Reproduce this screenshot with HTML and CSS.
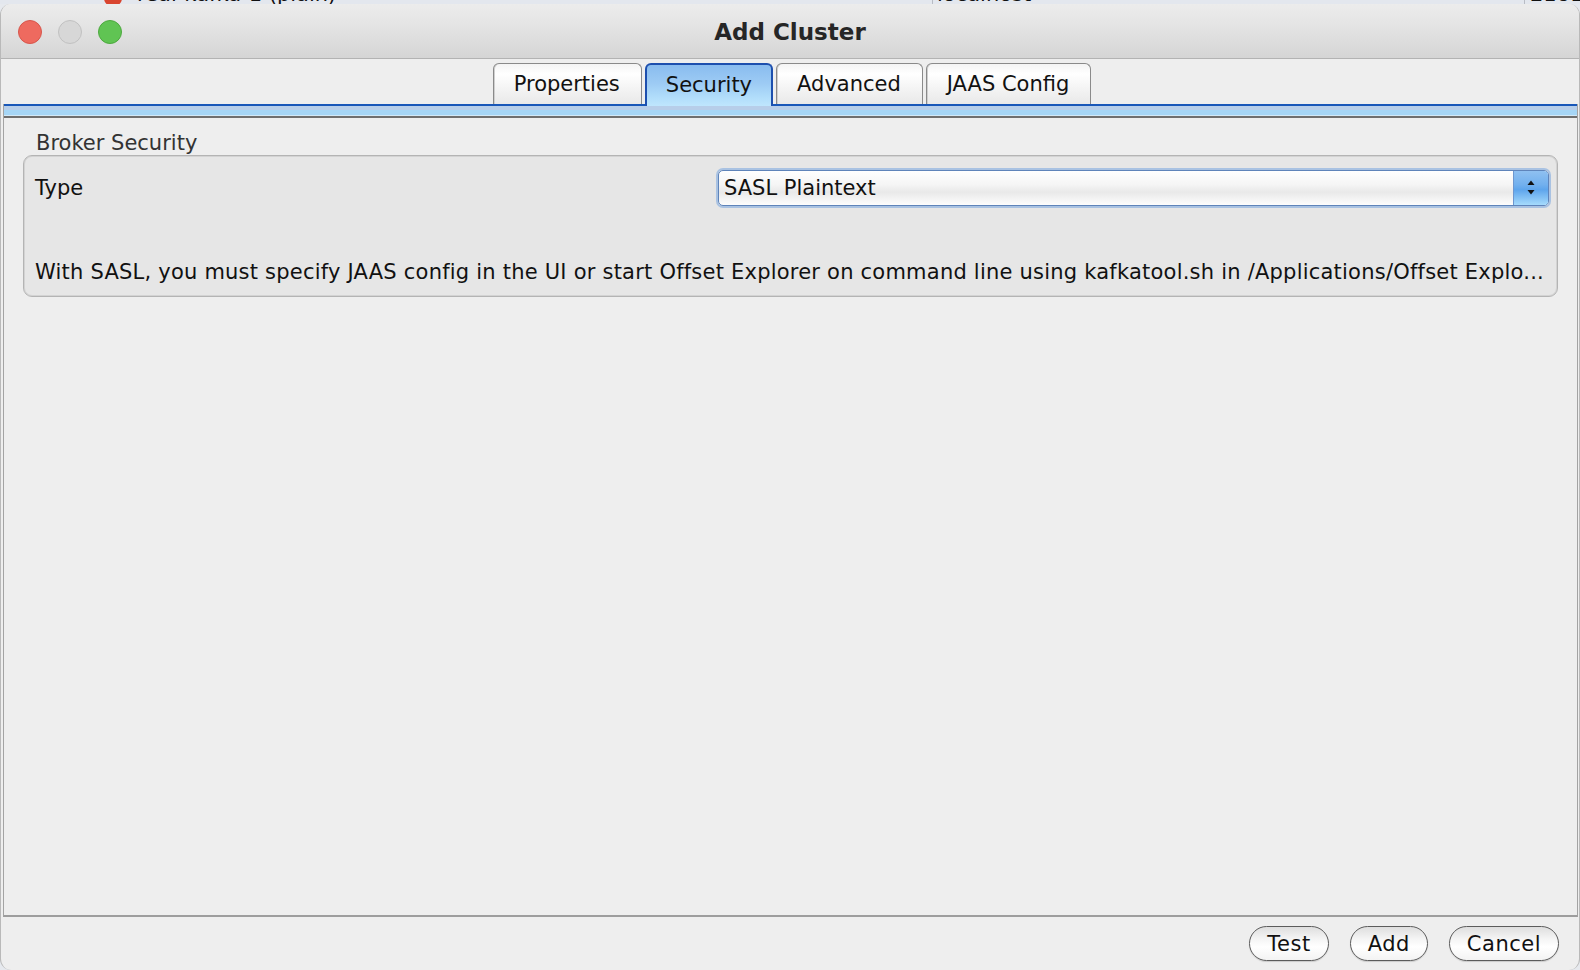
FILE: index.html
```html
<!DOCTYPE html>
<html>
<head>
<meta charset="utf-8">
<title>Add Cluster</title>
<link rel="stylesheet" href="styles.css">
</head>
<body>
<div class="desktop">
  <div class="backdrop">
    <div class="bd-row">
      <span class="bd-icon"></span>
      <span class="bd-name">real-kafka-1 (plain)</span>
      <span class="bd-host">localhost</span>
      <span class="bd-port">2181</span>
    </div>
  </div>

  <div class="window">
    <div class="titlebar">
      <div class="lights">
        <span class="light red"></span>
        <span class="light gray"></span>
        <span class="light green"></span>
      </div>
      <div class="title">Add Cluster</div>
      <div class="spacer"></div>
    </div>

    <div class="tabs">
      <div class="tab">Properties</div>
      <div class="tab active">Security</div>
      <div class="tab">Advanced</div>
      <div class="tab">JAAS Config</div>
    </div>

    <div class="panel">
      <div class="strip"></div>
      <div class="content">
        <div class="group-label">Broker Security</div>
        <div class="group">
          <div class="row">
            <div class="label">Type</div>
            <div class="combo">
              <span class="combo-text">SASL Plaintext</span>
              <span class="combo-btn">
                <svg width="8" height="16" viewBox="0 0 8 16"><polygon points="4,0.5 0.5,5 7.5,5" fill="#111"/><polygon points="0.5,10 7.5,10 4,14.5" fill="#111"/></svg>
              </span>
            </div>
          </div>
          <div class="note">With SASL, you must specify JAAS config in the UI or start Offset Explorer on command line using kafkatool.sh in /Applications/Offset Explo...</div>
        </div>
      </div>
    </div>

    <div class="buttons">
      <button class="btn">Test</button>
      <button class="btn">Add</button>
      <button class="btn">Cancel</button>
    </div>
  </div>
</div>
</body>
</html>
```
FILE: styles.css
```css
* { box-sizing: border-box; }
html, body {
  margin: 0;
  padding: 0;
  background: #e6e9ee;
  font-family: "DejaVu Sans", "Liberation Sans", sans-serif;
}
.desktop {
  position: relative;
  width: 1580px;
  height: 970px;
  overflow: hidden;
  background: #e6e9ee;
}

/* background window peeking at top */
.backdrop {
  position: absolute;
  left: 0;
  top: -20px;
  width: 1580px;
  height: 24px;
  background: #e3e7ee;
}
.bd-row {
  position: relative;
  height: 24px;
  font-size: 21px;
  line-height: 24px;
  color: #111;
}
.bd-icon {
  position: absolute;
  left: 104px;
  top: 9px;
  width: 18px;
  height: 18px;
  border-radius: 50%;
  background: #d9452f;
}
.bd-name { position: absolute; left: 137px; top: 2px; }
.bd-host { position: absolute; left: 937px; top: 2px; border-left: 1px solid #b8bcc4; padding-left: 4px; margin-left: -5px; }
.bd-port { position: absolute; left: 1530px; top: 2px; border-left: 1px solid #b8bcc4; padding-left: 5px; margin-left: -6px; }

/* dialog window */
.window {
  position: absolute;
  left: 0;
  top: 4px;
  width: 1580px;
  height: 966px;
  display: flex;
  flex-direction: column;
  background: #eeeeee;
  border-left: 1px solid #b9b9b9;
  border-right: 1px solid #b9b9b9;
  border-radius: 11px 11px 11px 11px;
  overflow: hidden;
}

.titlebar {
  height: 55px;
  flex: none;
  display: grid;
  grid-template-columns: 1fr auto 1fr;
  align-items: center;
  background: linear-gradient(#ececec, #e4e4e4 40%, #d5d5d5);
  border-bottom: 1px solid #b3b3b3;
}
.lights {
  display: flex;
  gap: 16px;
  padding-left: 17px;
  padding-top: 1px;
}
.light {
  width: 24px;
  height: 24px;
  border-radius: 50%;
  display: block;
}
.light.red { background: #ee6a5f; border: 1px solid #d7564c; }
.light.gray { background: #d7d7d7; border: 1px solid #c1c1c1; }
.light.green { background: #60c453; border: 1px solid #4da93f; }
.title {
  font-size: 23px;
  font-weight: bold;
  color: #262626;
  padding-top: 1px;
}

.tabs {
  flex: none;
  display: flex;
  justify-content: center;
  align-items: flex-end;
  gap: 3px;
  padding-top: 4px;
  padding-left: 4px;
}
.tab {
  height: 41px;
  padding: 0 21px 0 20px;
  display: flex;
  align-items: center;
  font-size: 21px;
  color: #111;
  border: 1px solid #8a8a8a;
  border-bottom: none;
  border-radius: 6px 6px 0 0;
  background: linear-gradient(#f4f4f4, #ffffff 25%, #f4f4f4 60%, #e9e9e9);
  box-shadow: inset 1px 0 0 #cfcfcf;
}
.tab.active {
  position: relative;
  z-index: 1;
  height: 43px;
  margin-bottom: -2px;
  padding: 0 19px 2px;
  border: 2px solid #1d4fae;
  border-bottom: none;
  background: linear-gradient(#89bcef, #9dcbf4 45%, #b2defb 80%, #bfe6fd);
  box-shadow: none;
}

.panel {
  flex: 1;
  display: flex;
  flex-direction: column;
  margin: 0 1px 0 2px;
  border-left: 1px solid #a3a3a3;
  border-right: 1px solid #a3a3a3;
  border-bottom: 2px solid #9d9d9d;
}
.strip {
  flex: none;
  height: 14px;
  border-top: 2px solid #1957b8;
  border-bottom: 2px solid #6f6f6f;
  background: linear-gradient(#b7cee9 0, #b7cee9 4px, #a6d6f6 4px, #a6d6f6 9px, #d3e9f7 9px);
}
.content {
  flex: 1;
  padding: 13px 19px 0 19px;
}
.group-label {
  font-size: 21px;
  line-height: 24px;
  color: #333;
  padding-left: 13px;
}
.group {
  background: #e6e6e6;
  border: 1px solid #b4b4b4;
  box-shadow: inset 0 0 0 1px #d3d3d3;
  border-radius: 9px;
  padding: 13px 8px 12px 11px;
}
.row {
  display: flex;
  align-items: center;
  justify-content: space-between;
}
.label {
  font-size: 21px;
  color: #111;
}
.combo {
  width: 831px;
  height: 36px;
  margin: 1px 0 1px;
  display: flex;
  align-items: stretch;
  border: 1px solid #5f84ba;
  border-radius: 5px;
  box-shadow: 0 0 0 2px #a9c2e2;
  background: linear-gradient(#ffffff, #f5f5f5 40%, #e9e9e9 62%, #fdfdfd);
  overflow: hidden;
}
.combo-text {
  flex: 1;
  padding-left: 5px;
  display: flex;
  align-items: center;
  font-size: 21px;
  color: #111;
}
.combo-btn {
  width: 35px;
  display: flex;
  align-items: center;
  justify-content: center;
  border-left: 1px solid #6d97cf;
  background: linear-gradient(#8fc0f1, #72b0ee 40%, #5ea5ec 55%, #a5dafc);
}
.combo-btn svg { display: block; }
.note {
  margin-top: 53px;
  font-size: 21px;
  line-height: 24px;
  color: #111;
  white-space: nowrap;
  overflow: hidden;
  letter-spacing: 0.22px;
}

.buttons {
  flex: none;
  height: 53px;
  display: flex;
  justify-content: flex-end;
  align-items: flex-start;
  gap: 21px;
  padding: 9px 20px 0 0;
}
.btn {
  height: 35px;
  padding: 0 17px;
  font-family: "DejaVu Sans", "Liberation Sans", sans-serif;
  font-size: 21px;
  letter-spacing: 0.5px;
  color: #111;
  border: 1.5px solid #5c5c5c;
  border-radius: 18px;
  background: linear-gradient(#dedede, #f4f4f4 35%, #ffffff 60%, #f3f3f3);
  box-shadow: 0 1px 1px rgba(0,0,0,0.15);
}
```
